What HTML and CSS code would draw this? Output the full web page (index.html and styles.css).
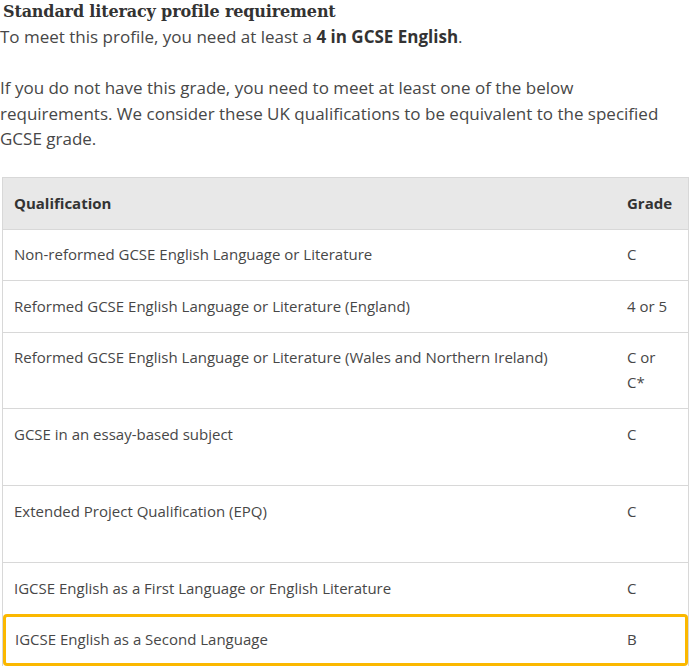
FILE: index.html
```html
<!DOCTYPE html>
<html lang="en">
<head>
<meta charset="utf-8">
<link rel="stylesheet" href="styles.css">
</head>
<body>
<main class="page">
  <h3 class="title">Standard literacy profile requirement</h3>
  <p class="text">To meet this profile, you need at least a <strong>4 in GCSE English</strong>.</p>
  <p class="text">If you do not have this grade, you need to meet at least one of the below requirements. We consider these UK qualifications to be equivalent to the specified GCSE grade.</p>
  <table class="quals">
    <thead>
      <tr><th class="q">Qualification</th><th class="g">Grade</th></tr>
    </thead>
    <tbody>
      <tr><td class="q">Non-reformed GCSE English Language or Literature</td><td class="g">C</td></tr>
      <tr><td class="q">Reformed GCSE English Language or Literature (England)</td><td class="g">4 or 5</td></tr>
      <tr><td class="q">Reformed GCSE English Language or Literature (Wales and Northern Ireland)</td><td class="g">C or C*</td></tr>
      <tr class="tall"><td class="q">GCSE in an essay-based subject</td><td class="g">C</td></tr>
      <tr class="tall"><td class="q">Extended Project Qualification (EPQ)</td><td class="g">C</td></tr>
      <tr><td class="q">IGCSE English as a First Language or English Literature</td><td class="g">C</td></tr>
      <tr class="highlight"><td class="q">IGCSE English as a Second Language</td><td class="g">B</td></tr>
    </tbody>
  </table>
</main>
</body>
</html>
```

FILE: styles.css
```css
html, body {
  margin: 0;
  padding: 0;
  background: #ffffff;
}
.page {
  padding: 0 3px 0 0;
  font-family: "Open Sans", "Liberation Sans", sans-serif;
  font-size: 17px;
  line-height: 25.5px;
  color: #474747;
}
.title {
  margin: 0;
  padding-left: 3px;
  font-family: "DejaVu Serif", "Liberation Serif", serif;
  font-weight: bold;
  font-size: 16px;
  line-height: 24px;
  color: #333333;
  letter-spacing: -0.15px;
}
.text {
  margin: 0 0 25.5px 0;
}
.text strong {
  font-weight: 700;
  color: #333333;
}
.quals {
  margin-left: 2px;
  width: 687px;
  border-collapse: separate;
  border-spacing: 0;
  border: 1px solid #d8d8d8;
  border-bottom: none;
  font-size: 15px;
  line-height: 25px;
}
.quals th,
.quals td {
  text-align: left;
  vertical-align: top;
  padding: 12.75px 11px;
  border-bottom: 1px solid #d8d8d8;
}
.quals thead th {
  background: #e8e8e8;
  font-weight: 700;
  color: #333333;
}
.quals .g {
  width: 45px;
  padding-left: 12px;
  padding-right: 15px;
}
.quals .tall td {
  height: 50.5px;
}
.quals .highlight td {
  border-top: 3px solid #fbb800;
  border-bottom: 3px solid #fbb800;
  padding-top: 10.5px;
  padding-bottom: 10.5px;
}
.quals .highlight td.q {
  border-left: 3px solid #fbb800;
  border-radius: 4px 0 0 4px;
  padding-left: 9px;
}
.quals .highlight td.g {
  border-right: 3px solid #fbb800;
  border-radius: 0 4px 4px 0;
  padding-right: 13px;
}
.quals tr:nth-last-child(2) td {
  border-bottom: none;
}
```
